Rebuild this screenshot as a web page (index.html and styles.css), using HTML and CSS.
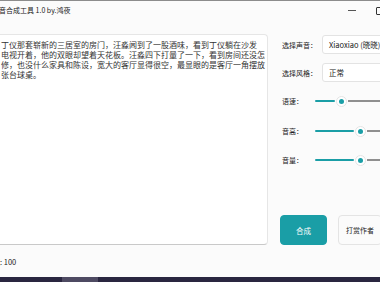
FILE: index.html
```html
<!DOCTYPE html>
<html lang="zh-CN">
<head>
    <meta charset="UTF-8">
    <title>语音合成工具 1.0 by.鸿夜</title>
    <link rel="stylesheet" href="styles.css">
</head>
<body>
    <div class="window">
        <div class="titlebar">
            <span class="title">语音合成工具 1.0 by.鸿夜</span>
            <div class="caption">
                <span class="cap-btn"><span class="min-icon"></span></span>
                <span class="cap-btn"><span class="max-icon"></span></span>
                <span class="cap-btn"></span>
            </div>
        </div>

        <div class="content">
            <div class="editor">
                <div class="line">丁仪那套崭新的三居室的房门，汪淼闻到了一股酒味，看到丁仪躺在沙发</div>
                <div class="line">电视开着，他的双眼却望着天花板。汪淼四下打量了一下，看到房间还没怎</div>
                <div class="line">修，也没什么家具和陈设，宽大的客厅显得很空，最显眼的是客厅一角摆放</div>
                <div class="line">张台球桌。</div>
            </div>

            <div class="side">
                <div class="row row-voice">
                    <span class="label">选择声音：</span>
                    <div class="combo">Xiaoxiao (晓晓)</div>
                </div>
                <div class="row row-style">
                    <span class="label">选择风格：</span>
                    <div class="combo">正常</div>
                </div>
                <div class="row row-rate">
                    <span class="label short">语速：</span>
                    <div class="slider">
                        <span class="fill" style="width: 20px"></span>
                        <span class="thumb"></span>
                        <span class="rest"></span>
                    </div>
                </div>
                <div class="row row-pitch">
                    <span class="label short">音高：</span>
                    <div class="slider">
                        <span class="fill" style="width: 39px"></span>
                        <span class="thumb"></span>
                        <span class="rest"></span>
                    </div>
                </div>
                <div class="row row-volume">
                    <span class="label short">音量：</span>
                    <div class="slider">
                        <span class="fill" style="width: 39px"></span>
                        <span class="thumb"></span>
                        <span class="rest"></span>
                    </div>
                </div>
                <div class="actions">
                    <button class="btn btn-primary">合成</button>
                    <button class="btn btn-donate">打赏作者</button>
                </div>
            </div>
        </div>

        <div class="status">
            <span class="count">字数: 100</span>
        </div>
    </div>
    <div class="taskbar"><span class="task-item"></span></div>
</body>
</html>
```

FILE: styles.css
```css
body {
    margin: 0;
    padding: 0;
    overflow: hidden;
    background-color: #fbfbfb;
    font-family: "Noto Sans CJK SC", "Noto Sans", sans-serif;
    color: #333;
}

.window {
    width: 422px;
    height: 276px;
    display: flex;
    flex-direction: column;
    background-color: #fbfbfb;
    border-top: 1px solid #8c8c8c;
}

/* title bar */
.titlebar {
    height: 34px;
    display: flex;
    align-items: flex-start;
}

.title {
    margin-left: -8px;
    margin-top: 4px;
    font-size: 7px;
    line-height: 10px;
    color: #222;
    white-space: nowrap;
}

.caption {
    margin-left: auto;
    display: flex;
}

.cap-btn {
    width: 28px;
    height: 19px;
    display: flex;
    align-items: center;
    justify-content: center;
}

.min-icon {
    width: 8px;
    height: 1px;
    background-color: #555;
}

.max-icon {
    width: 6px;
    height: 6px;
    border: 1px solid #333;
    border-radius: 1px;
}

/* main area */
.content {
    height: 211px;
    display: flex;
}

.editor {
    flex: none;
    box-sizing: border-box;
    width: 280px;
    height: 211px;
    margin-left: -12px;
    padding: 5px 0 0 12px;
    background-color: #fff;
    border: 1px solid #e6e6e6;
    border-bottom-color: #c9c9c9;
    border-radius: 4px;
    font-size: 8px;
    line-height: 10px;
    color: #333;
    overflow: hidden;
}

.line {
    white-space: nowrap;
}

.side {
    flex: 1;
    min-width: 0;
    margin-left: 14px;
    display: flex;
    flex-direction: column;
}

.row {
    display: flex;
    align-items: center;
    height: 19px;
    font-size: 7px;
    color: #222;
}

.row-voice { margin-top: 1px; }
.row-style { margin-top: 9px; }
.row-rate { margin-top: 9px; height: 20px; }
.row-pitch { margin-top: 10px; height: 20px; }
.row-volume { margin-top: 9px; height: 20px; }

.label {
    flex: none;
    width: 40px;
    white-space: nowrap;
}

.label.short {
    width: 33px;
}

.combo {
    flex: none;
    box-sizing: border-box;
    width: 110px;
    height: 19px;
    padding-left: 6px;
    display: flex;
    align-items: center;
    background-color: #fff;
    border: 1px solid #e3e3e3;
    border-radius: 3px;
    font-size: 7.5px;
    color: #222;
    white-space: nowrap;
}

/* sliders */
.slider {
    flex: none;
    width: 110px;
    display: flex;
    align-items: center;
}

.fill {
    flex: none;
    height: 2px;
    margin-right: 1px;
    background-color: #1a9ea6;
    border-radius: 1px;
}

.thumb {
    flex: none;
    box-sizing: border-box;
    width: 11px;
    height: 11px;
    display: flex;
    align-items: center;
    justify-content: center;
    background-color: #fff;
    border: 1px solid #e4e4e4;
    border-radius: 50%;
}

.thumb::after {
    content: "";
    width: 5px;
    height: 5px;
    background-color: #1a9ea6;
    border-radius: 50%;
}

.rest {
    flex: 1;
    height: 2px;
    margin-left: 1px;
    background-color: #8f8f8f;
}

/* buttons */
.actions {
    margin-top: auto;
    margin-left: -2px;
    display: flex;
    gap: 11px;
}

.btn {
    flex: none;
    box-sizing: border-box;
    height: 30px;
    width: 47px;
    padding: 0;
    font-family: inherit;
    font-size: 7.5px;
    color: #222;
    background-color: #fbfbfb;
    border: 1px solid #e4e4e4;
    border-radius: 4px;
}

.btn-donate {
    width: 44px;
    font-size: 7px;
    white-space: nowrap;
}

.btn-primary {
    color: #fff;
    background-color: #1a9ea6;
    border-color: #1a9ea6;
}

/* status + taskbar */
.status {
    height: 31px;
    display: flex;
    align-items: center;
    padding-top: 1px;
}

.count {
    margin-left: -15px;
    font-size: 7.5px;
    color: #222;
    white-space: nowrap;
}

.taskbar {
    height: 5px;
    background-color: #2a2640;
    display: flex;
}

.task-item {
    width: 36px;
    margin-left: 62px;
    background-color: #4e4a62;
}
```
